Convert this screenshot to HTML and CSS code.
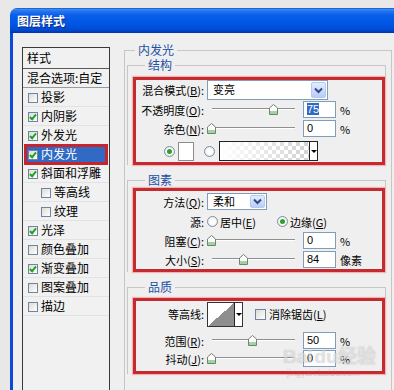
FILE: index.html
```html
<!DOCTYPE html>
<html lang="zh-CN">
<head>
    <meta charset="UTF-8">
    <meta name="viewport" content="width=device-width, initial-scale=1.0">
    <title>图层样式</title>
    <link rel="stylesheet" href="styles.css">
</head>
<body>
<div class="desk">
    <div class="titlebar">图层样式</div>
    <div class="frame">

        <ul class="style-list">
            <li class="head">样式</li>
            <li class="blend">混合选项:自定</li>
            <li><span class="cb"></span>投影</li>
            <li><span class="cb on"></span>内阴影</li>
            <li><span class="cb on"></span>外发光</li>
            <li class="sel"><span class="cb on"></span>内发光</li>
            <li><span class="cb on"></span>斜面和浮雕</li>
            <li class="sub"><span class="cb"></span>等高线</li>
            <li class="sub"><span class="cb"></span>纹理</li>
            <li><span class="cb on"></span>光泽</li>
            <li><span class="cb"></span>颜色叠加</li>
            <li><span class="cb on"></span>渐变叠加</li>
            <li><span class="cb"></span>图案叠加</li>
            <li><span class="cb"></span>描边</li>
        </ul>

        <fieldset class="panel">
            <legend>内发光</legend>

            <fieldset class="group">
                <legend>结构</legend>
                <div class="mark">
                    <div class="row r-tall">
                        <span class="lbl">混合模式(<u>B</u>):</span>
                        <div class="select wide"><span class="val">变亮</span><span class="drop"><svg width="9" height="7" viewBox="0 0 9 7"><path d="M1 1.5 L4.5 5 L8 1.5" fill="none" stroke="#2d4a8a" stroke-width="2"/></svg></span></div>
                    </div>
                    <div class="row">
                        <span class="lbl">不透明度(<u>O</u>):</span>
                        <div class="slider"><div class="track"></div><svg class="thumb" style="left:62px" width="9" height="11" viewBox="0 0 9 11"><path d="M0.5 10.5 V4 L4.5 0.5 L8.5 4 V10.5 Z" fill="#fff" stroke="#6f836f"/><rect x="1" y="7" width="7" height="3" fill="#9fd39f"/></svg></div>
                        <div class="num"><span class="hl">75</span></div>
                        <span class="unit">%</span>
                    </div>
                    <div class="row">
                        <span class="lbl">杂色(<u>N</u>):</span>
                        <div class="slider"><div class="track"></div><svg class="thumb" style="left:0px" width="9" height="11" viewBox="0 0 9 11"><path d="M0.5 10.5 V4 L4.5 0.5 L8.5 4 V10.5 Z" fill="#fff" stroke="#6f836f"/><rect x="1" y="7" width="7" height="3" fill="#9fd39f"/></svg></div>
                        <div class="num">0</div>
                        <span class="unit">%</span>
                    </div>
                    <div class="row r-color">
                        <span class="radio on"></span>
                        <span class="swatch"></span>
                        <span class="radio"></span>
                        <div class="gradbox"><span class="grad"></span><span class="garr"></span></div>
                    </div>
                </div>
            </fieldset>

            <fieldset class="group g2">
                <legend>图素</legend>
                <div class="mark">
                    <div class="row r-method">
                        <span class="lbl">方法(<u>Q</u>):</span>
                        <div class="select short"><span class="val">柔和</span><span class="drop"><svg width="9" height="7" viewBox="0 0 9 7"><path d="M1 1.5 L4.5 5 L8 1.5" fill="none" stroke="#2d4a8a" stroke-width="2"/></svg></span></div>
                    </div>
                    <div class="row">
                        <span class="lbl">源:</span>
                        <span class="radio"></span><span class="opt">居中(<u>E</u>)</span>
                        <span class="radio on"></span><span class="opt">边缘(<u>G</u>)</span>
                    </div>
                    <div class="row">
                        <span class="lbl">阻塞(<u>C</u>):</span>
                        <div class="slider"><div class="track"></div><svg class="thumb" style="left:0px" width="9" height="11" viewBox="0 0 9 11"><path d="M0.5 10.5 V4 L4.5 0.5 L8.5 4 V10.5 Z" fill="#fff" stroke="#6f836f"/><rect x="1" y="7" width="7" height="3" fill="#9fd39f"/></svg></div>
                        <div class="num">0</div>
                        <span class="unit">%</span>
                    </div>
                    <div class="row">
                        <span class="lbl">大小(<u>S</u>):</span>
                        <div class="slider"><div class="track"></div><svg class="thumb" style="left:32px" width="9" height="11" viewBox="0 0 9 11"><path d="M0.5 10.5 V4 L4.5 0.5 L8.5 4 V10.5 Z" fill="#fff" stroke="#6f836f"/><rect x="1" y="7" width="7" height="3" fill="#9fd39f"/></svg></div>
                        <div class="num">84</div>
                        <span class="unit">像素</span>
                    </div>
                </div>
            </fieldset>

            <fieldset class="group g3">
                <legend>品质</legend>
                <div class="mark">
                    <div class="row r-contour">
                        <span class="lbl">等高线:</span>
                        <div class="contour"><span class="curve"></span><span class="garr"></span></div>
                        <span class="cb big"></span><span>消除锯齿(<u>L</u>)</span>
                    </div>
                    <div class="row r-range">
                        <span class="lbl">范围(<u>R</u>):</span>
                        <div class="slider"><div class="track"></div><svg class="thumb" style="left:41px" width="9" height="11" viewBox="0 0 9 11"><path d="M0.5 10.5 V4 L4.5 0.5 L8.5 4 V10.5 Z" fill="#fff" stroke="#6f836f"/><rect x="1" y="7" width="7" height="3" fill="#9fd39f"/></svg></div>
                        <div class="num">50</div>
                        <span class="unit">%</span>
                    </div>
                    <div class="row r-jitter">
                        <span class="lbl">抖动(<u>J</u>):</span>
                        <div class="slider"><div class="track"></div><svg class="thumb" style="left:0px" width="9" height="11" viewBox="0 0 9 11"><path d="M0.5 10.5 V4 L4.5 0.5 L8.5 4 V10.5 Z" fill="#fff" stroke="#6f836f"/><rect x="1" y="7" width="7" height="3" fill="#9fd39f"/></svg></div>
                        <div class="num">0</div>
                        <span class="unit">%</span>
                    </div>
                </div>
            </fieldset>
        </fieldset>

    </div>
    <div class="watermark">Bai<span class="paw">du</span>经验<div class="wm-url">jingyan.baidu.com</div></div>
</div>
</body>
</html>
```

FILE: styles.css
```css
body {
    margin: 0;
    width: 394px;
    height: 390px;
    overflow: hidden;
    background: #e8e8e8;
    font-family: "Noto Sans CJK SC", "Liberation Sans", sans-serif;
    font-size: 12px;
    line-height: 14px;
    color: #000;
}

u {
    text-decoration-thickness: 1px;
    text-underline-offset: 1px;
}

.desk {
    position: relative;
    padding: 8px 0 0 10px;
    height: 390px;
    box-sizing: border-box;
}

.titlebar {
    height: 25px;
    box-sizing: border-box;
    padding-left: 7px;
    border-top-left-radius: 7px;
    background: linear-gradient(#0a3aa8 0, #3c8ef6 1px, #2476f2 3px, #0a5fe8 7px, #0056e4 16px, #0049d2 22px, #0035a6 25px);
    color: #fff;
    font-weight: bold;
    line-height: 25px;
    text-shadow: 1px 1px #0c2a80;
}

.frame {
    display: flex;
    align-items: flex-start;
    height: 360px;
    border-left: 3px solid #0b4ad4;
    background: #efefef;
}

/* left list */

.style-list {
    list-style: none;
    margin: 14px 0 0 9px;
    padding: 0;
    width: 88px;
    height: 350px;
    box-sizing: border-box;
    border: 1px solid #3a3a3a;
    background: #f1f1f1;
    flex: none;
}

.style-list li {
    height: 18px;
    line-height: 18px;
    border-bottom: 1px solid #e2e2e2;
    padding-left: 5px;
    white-space: nowrap;
}

.style-list .head {
    height: 20px;
    line-height: 20px;
    padding-left: 4px;
    border-bottom: 1px solid #5a5a5a;
}

.style-list .blend {
    padding-left: 4px;
    border-bottom: 1px solid #9a9a9a;
}

.style-list .sub {
    padding-left: 18px;
}

.style-list .sel {
    margin: 0 2px;
    padding-left: 3px;
    background: #316ac5;
    color: #fff;
    outline: 3px solid #c8242c;
    outline-offset: -2px;
}

.cb {
    display: inline-block;
    position: relative;
    width: 8px;
    height: 8px;
    border: 1px solid #6f83a3;
    background: linear-gradient(135deg, #dddbd5, #fff);
    margin-right: 3px;
    vertical-align: -1px;
}

.cb.on::after {
    content: "";
    position: absolute;
    left: 2px;
    top: 0;
    width: 2px;
    height: 5px;
    border: solid #21a121;
    border-width: 0 2px 2px 0;
    transform: rotate(40deg);
}

.cb.big {
    width: 9px;
    height: 9px;
    margin: 0 3px 0 12px;
}

/* right panel */

fieldset {
    margin: 0;
    min-width: 0;
}

legend {
    color: #1d4fa6;
    line-height: 14px;
    padding: 0 3px;
}

.panel {
    margin: 10px 0 0 14px;
    width: 268px;
    height: 360px;
    box-sizing: border-box;
    border: 1px solid #c6c6c6;
    padding: 1px 5px 0 2px;
    flex: none;
}

.panel > legend {
    margin-left: 8px;
}

.group {
    border: 1px solid #c6c6c6;
    border-bottom: none;
    padding: 5px 0 0 5px;
}

.group > legend {
    margin-left: 12px;
}

.g2 {
    margin-top: 8px;
    padding-top: 1px;
}

.g3 {
    margin-top: 8px;
    padding-top: 4px;
}

.mark {
    border: 3px solid #c52a31;
    box-shadow: 0 0 1px 1px #f0b5b5;
    font-size: 11px;
}

.row {
    display: flex;
    align-items: center;
    height: 19px;
    white-space: nowrap;
}

.r-tall {
    height: 20px;
}

.r-color {
    height: 24px;
    box-sizing: border-box;
    padding: 2px 0 0 28px;
}

.r-method {
    height: 21px;
}

.r-contour {
    height: 26px;
}

.r-range {
    margin-top: 4px;
}

.r-jitter {
    height: 17px;
    margin-bottom: 4px;
}

.lbl {
    width: 71px;
    box-sizing: border-box;
    padding-right: 3px;
    text-align: right;
    flex: none;
}

.select {
    display: flex;
    height: 20px;
    box-sizing: border-box;
    border: 1px solid #7f9db9;
    background: #fff;
}

.select.wide {
    width: 121px;
}

.select.short {
    width: 60px;
    height: 17px;
}

.select .val {
    flex: 1;
    padding-left: 5px;
    line-height: 17px;
}

.select.short .val {
    line-height: 14px;
}

.drop {
    display: flex;
    align-items: center;
    justify-content: center;
    width: 13px;
    margin: 1px;
    border: 1px solid #b6c9ef;
    border-radius: 2px;
    background: linear-gradient(#e4ecfd, #b9cdf7);
}

.slider {
    position: relative;
    width: 96px;
    height: 11px;
    flex: none;
}

.track {
    margin: 4px 0 0 5px;
    width: 83px;
    height: 1px;
    background: #8f8f8f;
    box-shadow: 0 1px #fff;
}

.thumb {
    position: absolute;
    top: 0;
}

.num {
    width: 33px;
    height: 17px;
    box-sizing: border-box;
    border: 1px solid #7f9db9;
    background: #fff;
    padding-left: 3px;
    font-family: "Liberation Sans", sans-serif;
    font-size: 11px;
    line-height: 15px;
    flex: none;
}

.hl {
    background: #316ac5;
    color: #fff;
}

.unit {
    margin-left: 4px;
}

.radio {
    position: relative;
    width: 11px;
    height: 11px;
    box-sizing: border-box;
    border: 1px solid #7b8ea8;
    border-radius: 50%;
    background: radial-gradient(#fff 40%, #dcdbd4);
    flex: none;
}

.radio.on::after {
    content: "";
    position: absolute;
    left: 2px;
    top: 2px;
    width: 5px;
    height: 5px;
    border-radius: 50%;
    background: #2aa12a;
}

.opt {
    margin: 0 21px 0 2px;
}

.swatch {
    width: 16px;
    height: 19px;
    box-sizing: border-box;
    border: 1px solid #8c8c8c;
    background: #fff;
    margin: 0 10px 0 3px;
}

.gradbox {
    display: flex;
    width: 99px;
    height: 20px;
    box-sizing: border-box;
    border: 1px solid #222;
    margin-left: 4px;
}

.grad {
    flex: 1;
    background:
        linear-gradient(to right, #fff, rgba(255, 255, 255, 0)),
        repeating-conic-gradient(#d2d2d2 0 25%, #fff 0 50%) 0 0 / 8px 8px;
}

.garr {
    position: relative;
    width: 7px;
    border-left: 1px solid #222;
    background: #fff;
}

.garr::after {
    content: "";
    position: absolute;
    left: 1px;
    top: 50%;
    margin-top: -1px;
    border: 3px solid transparent;
    border-top: 3px solid #000;
    border-bottom: 0;
}

.contour {
    display: flex;
    width: 36px;
    height: 25px;
    box-sizing: border-box;
    border: 1px solid #333;
}

.curve {
    flex: 1;
    background: linear-gradient(to bottom right, #fff 50%, #8e8e8e 50%);
}

/* watermark over the bottom corner */

.watermark {
    position: absolute;
    left: 283px;
    top: 346px;
    font-family: "Liberation Sans", sans-serif;
    font-size: 19px;
    font-weight: bold;
    line-height: 22px;
    color: rgba(255, 255, 255, 0.5);
    text-shadow: 0 0 1px rgba(120, 120, 120, 0.45);
    white-space: nowrap;
}

.paw {
    margin-left: 2px;
}

.wm-url {
    font-size: 9px;
    font-weight: normal;
    line-height: 10px;
    margin-left: 4px;
    color: rgba(200, 80, 80, 0.3);
    text-shadow: none;
}
```
